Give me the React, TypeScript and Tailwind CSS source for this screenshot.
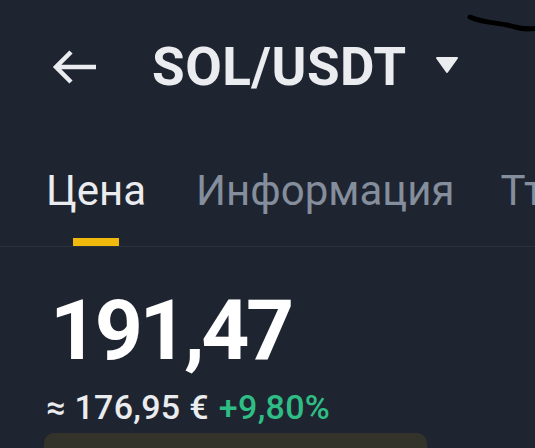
export default function App() {
  return (
    <div className="relative w-[535px] h-[448px] overflow-hidden bg-[#1f2530] font-['Roboto',sans-serif]">
      {/* pen stroke */}
      <svg className="absolute left-0 top-0" width="535" height="40" viewBox="0 0 535 40">
        <path d="M470 17 C 485 24, 500 22, 515 27 C 525 30, 532 29, 540 28" stroke="#000" strokeWidth="5" fill="none" strokeLinecap="round" />
      </svg>

      {/* header */}
      <div className="flex items-center h-[66px] mt-[34px] pl-[52px]">
        <svg width="46" height="34" viewBox="0 0 46 34" className="shrink-0">
          <path d="M44 17 H4 M19 2 L4 17 L19 32" stroke="#eaecef" strokeWidth="4.5" fill="none" strokeLinejoin="miter" />
        </svg>
        <span className="ml-[54px] text-[53px] font-bold text-[#eaecef] leading-none tracking-[0.5px]">SOL/USDT</span>
        <svg width="24" height="18" viewBox="0 0 24 18" className="ml-[28px] mt-[-4px]">
          <path d="M2 2 H22 L12 16 Z" fill="#eaecef" stroke="#eaecef" strokeWidth="2" strokeLinejoin="round" />
        </svg>
      </div>

      {/* tabs */}
      <div className="flex items-start mt-[70px] pl-[46px] h-[77px] border-b border-[#2b3139] whitespace-nowrap">
        <div className="flex flex-col items-center">
          <span className="text-[42px] leading-[42px] text-[#eaecef]">Цена</span>
          <div className="mt-[26px] w-[46px] h-[8px] bg-[#f0b90b]" />
        </div>
        <span className="ml-[50px] text-[42px] leading-[42px] text-[#848e9c]">Информация</span>
        <span className="ml-[46px] text-[42px] leading-[42px] text-[#848e9c]">Тт</span>
      </div>

      {/* price */}
      <div className="pl-[50px] mt-[42px]">
        <div className="text-[84px] leading-[84px] font-bold text-white tracking-[-3.5px]">191,47</div>
        <div className="mt-[16px] flex items-baseline gap-[10px] text-[34px] leading-[36px] font-medium tracking-[0.3px]">
          <span className="text-[#eaecef] -ml-[4px]">≈ 176,95 €</span>
          <span className="text-[#2ebd85]">+9,80%</span>
        </div>
      </div>

      <div className="ml-[44px] mt-[8px] w-[383px] h-[40px] rounded-[10px] bg-[#34332b]" />
    </div>
  );
}
